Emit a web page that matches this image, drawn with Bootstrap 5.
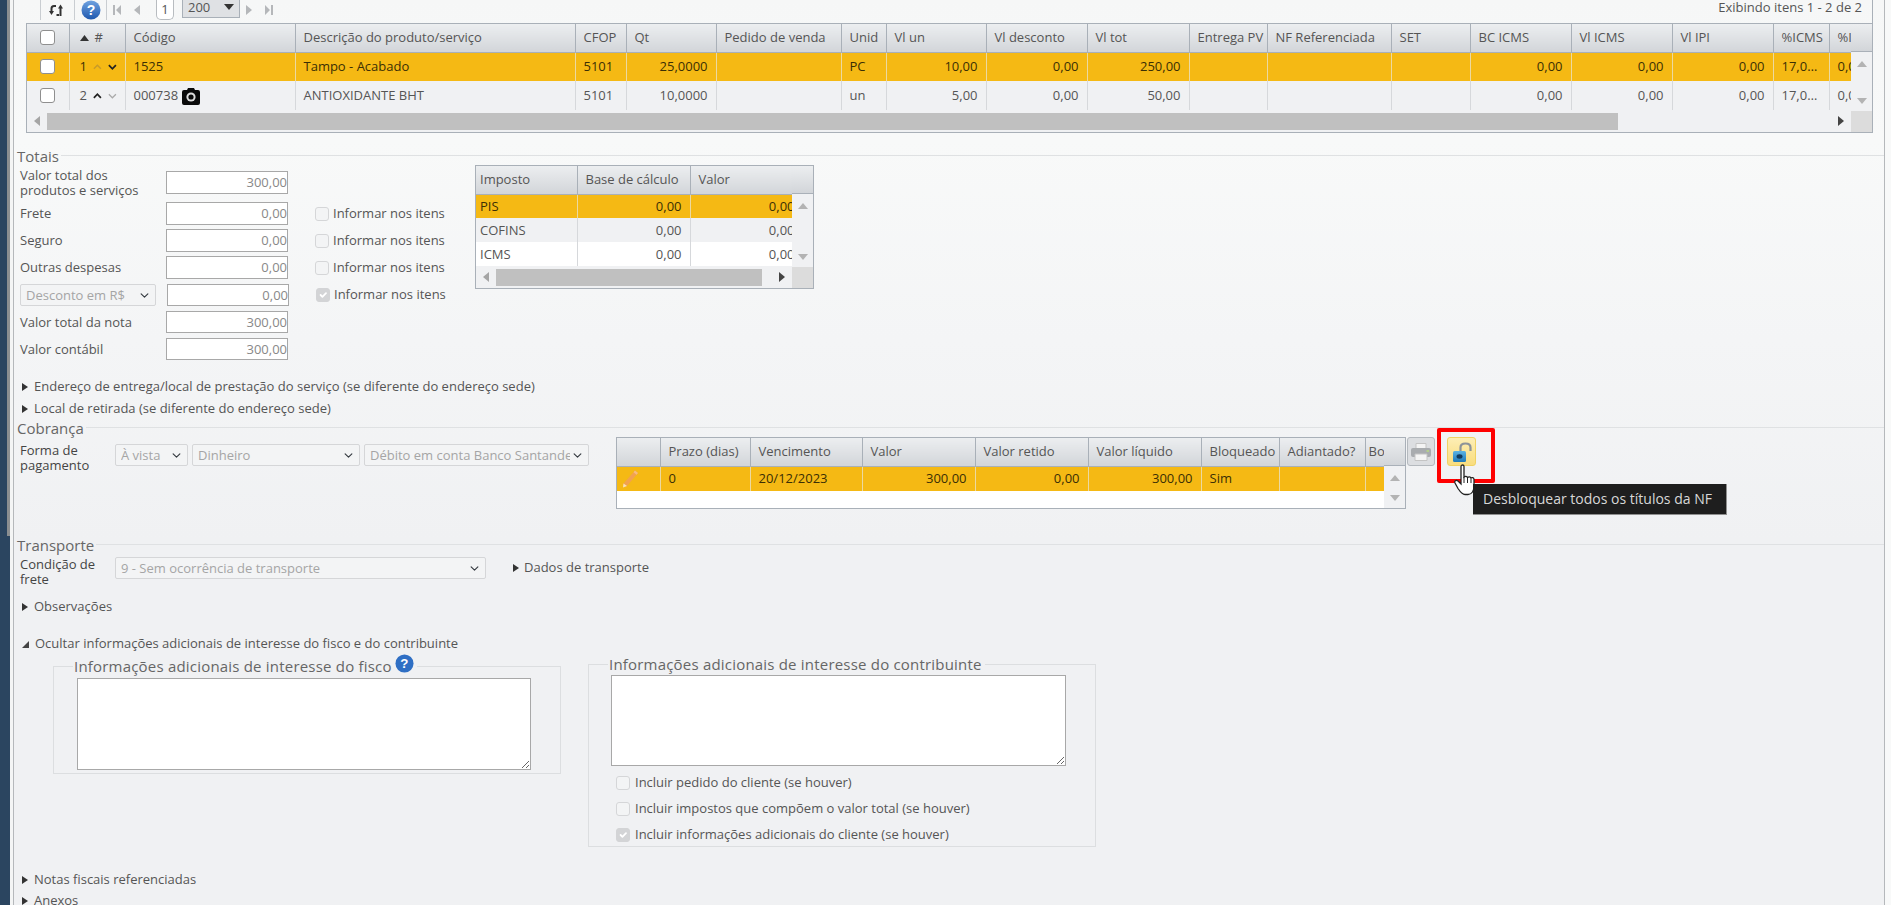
<!DOCTYPE html>
<html lang="pt-BR">
<head>
  <meta charset="UTF-8">
  <title>Nota fiscal</title>
  <link href="https://cdn.jsdelivr.net/npm/bootstrap@5.3.2/dist/css/bootstrap.min.css" rel="stylesheet">
  <style>
    html, body { height: 905px; overflow: hidden; }
    body {
      background: #f8f9f9;
      color: #555;
      font-family: "Open Sans", "Noto Sans", sans-serif;
      font-size: 13px;
      position: relative;
    }
    .shell { display: flex; height: 905px; }
    .strip { width: 10px; background: linear-gradient(90deg, #2b4560 7px, #8b8e90 7px); flex: none; height: 536px; box-shadow: 0 369px 0 #2b4560; }
    .strip-gap { width: 3px; background: #f4f5f5; flex: none; }
    .sheet {
      width: 1872px; flex: none; height: 905px;
      border-left: 1px solid #b5b8bb; border-right: 1px solid #b5b8bb;
      background: linear-gradient(#f6f7f7, #f8f9f9 140px, #f0f1f3 540px);
    }
    /* grid principal */
    .grid-top { margin-left: 12px; width: 1847px; height: 133px; }
    .pager { height: 23px; display: flex; align-items: flex-start; border-right: 1px solid #a9b0b8; }
    .pager-sep { width: 1px; height: 20px; background: #c9cdd1; flex: none; }
    .pager-cell { height: 20px; display: flex; align-items: center; justify-content: center; flex: none; }
    .cell-start { width: 14px; } .cell-a { width: 33px; } .cell-b { width: 31px; } .cell-c { width: 20px; }
    .page-num { width: 18px; height: 20px; border: 1px solid #b8bcc0; border-top: 0; border-radius: 0 0 5px 5px; background: #fff; text-align: center; line-height: 18px; margin: 0 8px 0 9px; flex: none; }
    .page-size { width: 58px; height: 18px; border: 1px solid #a9b0b8; border-top: 0; background: #dfe1e4; display: flex; justify-content: space-between; align-items: center; padding: 0 5px 3px; line-height: 14px; flex: none; margin-right: -1px; }
    .pager-info { margin-left: auto; margin-right: 10px; line-height: 15px; }
    .grid-box { border: 1px solid #a9b0b8; display: flex; flex-wrap: wrap; background: #f0f1f3; }
    .main-box { width: 1847px; height: 110px; }
    .tax-box { width: 339px; height: 124px; }
    .pay-box { width: 790px; height: 72px; background: #fff; }
    .grid-view { overflow: hidden; flex: none; }
    .main-box .grid-view { width: 1824px; }
    .tax-box .grid-view { width: 316px; }
    .pay-box .grid-view { width: 767px; }
    .nf-table { table-layout: fixed; width: 100%; margin: 0; border-collapse: collapse; --bs-table-bg: transparent; --bs-table-color: #555; font-size: 13px; }
    .nf-table > :not(caption) > * > * { padding: 0 8px; border-bottom: 0; border-right: 1px solid #d6d8db; white-space: nowrap; overflow: hidden; vertical-align: middle; color: #555; box-shadow: none; background: none; line-height: 15px; }
    .nf-table > thead > tr > th { height: 28px; font-weight: 400; background: linear-gradient(#eceef0, #d2d5d9); border-right: 1px solid #a9b0b8; border-bottom: 1px solid #a9b0b8; }
    .nf-table > thead > tr > .bo-head { padding: 0 0 0 3px; }
    .nf-table > tbody > tr > td { height: 29px; }
    .nf-table > tbody > tr.picked > td { background: #f5b914; color: #3b2f05; border-right-color: #ecd9a0; }
    .nf-table > tbody > tr.plain > td { background: #fff; }
    .tax-box .nf-table > tbody > tr > td { height: 24px; }
    .pay-box .nf-table > tbody > tr > td { height: 25px; }
    .nf-table > * > * > .num { text-align: right; }
    .nf-table > * > * > .ell { text-overflow: ellipsis; }
    .clip-val { display: inline-block; margin-right: -3px; }
    .vbar { width: 21px; flex: none; display: flex; flex-direction: column; background: #f0f1f3; }
    .vbar-cap { height: 28px; background: linear-gradient(#eceef0, #d2d5d9); border-bottom: 1px solid #a9b0b8; flex: none; }
    .vbar-track { flex: 1; display: flex; flex-direction: column; justify-content: space-between; align-items: center; padding: 9px 0 7px; }
    .hbar { width: 100%; height: 21px; display: flex; align-items: center; background: #f0f1f3; }
    .hbar-thumb { height: 17px; background: #c0c0c0; flex: none; }
    .thumb-main { width: 1571px; } .thumb-tax { width: 266px; }
    .hbar-arrow { width: 20px; flex: none; display: flex; justify-content: center; }
    .hbar-corner { width: 21px; height: 21px; background: #dcdcdc; flex: none; }
    .up { width: 0; height: 0; border: 5px solid transparent; border-top: 0; border-bottom: 6px solid #b3b3b3; }
    .down { width: 0; height: 0; border: 5px solid transparent; border-bottom: 0; border-top: 6px solid #b3b3b3; }
    .tri-l { width: 0; height: 0; border: 5px solid transparent; border-left: 0; border-right: 6px solid #a5a5a5; }
    .tri-r { width: 0; height: 0; border: 5px solid transparent; border-right: 0; border-left: 6px solid #444; }
    .nf-check { width: 15px; height: 15px; margin: 0 auto; display: block; border: 1px solid #8f8f8f; border-radius: 3px; background: #fff; }
    /* colunas */
    .main-cols col:nth-child(1) { width: 42px; } .main-cols col:nth-child(2) { width: 56px; }
    .main-cols col:nth-child(3) { width: 170px; } .main-cols col:nth-child(4) { width: 280px; }
    .main-cols col:nth-child(5) { width: 51px; } .main-cols col:nth-child(6) { width: 90px; }
    .main-cols col:nth-child(7) { width: 125px; } .main-cols col:nth-child(8) { width: 45px; }
    .main-cols col:nth-child(9) { width: 100px; } .main-cols col:nth-child(10) { width: 101px; }
    .main-cols col:nth-child(11) { width: 102px; } .main-cols col:nth-child(12) { width: 78px; }
    .main-cols col:nth-child(13) { width: 124px; } .main-cols col:nth-child(14) { width: 79px; }
    .main-cols col:nth-child(15) { width: 101px; } .main-cols col:nth-child(16) { width: 101px; }
    .main-cols col:nth-child(17) { width: 101px; } .main-cols col:nth-child(18) { width: 56px; }
    .main-cols col:nth-child(19) { width: 22px; }
    .tax-cols col:nth-child(1) { width: 101px; } .tax-cols col:nth-child(2) { width: 113px; } .tax-cols col:nth-child(3) { width: 102px; }
    .pay-cols col:nth-child(1) { width: 43px; } .pay-cols col:nth-child(2) { width: 90px; } .pay-cols col:nth-child(3) { width: 112px; }
    .pay-cols col:nth-child(4) { width: 113px; } .pay-cols col:nth-child(5) { width: 113px; } .pay-cols col:nth-child(6) { width: 113px; }
    .pay-cols col:nth-child(7) { width: 78px; } .pay-cols col:nth-child(8) { width: 86px; } .pay-cols col:nth-child(9) { width: 19px; }
    .pos-cell { display: flex; align-items: center; gap: 6px; padding-left: 2px; }
    .code-cell { display: flex; align-items: center; gap: 4px; }
    /* secoes */
    .sec-head { display: flex; align-items: center; gap: 2px; font-size: 15px; line-height: 18px; color: #666; padding-left: 3px; height: 18px; }
    .sec-head::after { content: ""; flex: 1; height: 1px; background: #dfe1e3; margin-top: -2px; }
    .sec-totais { margin-top: 14px; }
    .tot-body { display: flex; padding-left: 6px; height: 211px; }
    .tot-form { width: 455px; padding-top: 6px; flex: none; }
    .tot-row { display: flex; align-items: center; height: 23px; margin-bottom: 4px; }
    .tot-row:nth-child(1) { margin-bottom: 8px; }
    .tot-row:nth-child(4) { margin-bottom: 5px; }
    .tot-row:nth-child(5), .tot-row:nth-child(6), .tot-row:nth-child(7) { height: 22px; margin-bottom: 5px; }
    .tot-label { width: 146px; flex: none; line-height: 15px; color: #555; }
    .tot-input { width: 122px; height: 100%; border: 1px solid #a8a8a8; background: #fff; text-align: right; color: #888; line-height: 20px; flex: none; }
    .tot-check { display: flex; align-items: center; gap: 4px; margin-left: 27px; color: #555; }
    .form-select.nf-select { height: 22px; padding: 0 18px 0 5px; font-size: 13px; color: #a5a5a5; border: 1px solid #d5d6d8; border-radius: 2px; background-color: #f3f4f5; background-position: right 5px center; background-size: 11px 9px; flex: none; line-height: 20px; }
    .form-select.w-desc { width: 136px; margin-right: 11px; }
    .check-off { width: 14px; height: 14px; margin: 0; flex: none; }
    .form-check-input.check-off:disabled { opacity: 1; background-color: #f3f4f5; border-color: #d5d6d8; border-radius: 3px; }
    .form-check-input.check-off:checked:disabled { background-color: #d3d4d6; border-color: #d3d4d6; }
    .tri-link { display: flex; align-items: center; gap: 6px; height: 22px; padding-left: 8px; color: #555; }
    .tri-short { height: 21px; }
    .tri-dark { width: 0; height: 0; border: 4px solid transparent; border-right: 0; border-left: 6px solid #333; flex: none; }
    .tri-open { width: 0; height: 0; border-style: solid; border-width: 0 0 7px 7px; border-color: transparent transparent #444 transparent; flex: none; }
    .cob-body { display: flex; height: 99px; padding-left: 6px; }
    .pay-label { width: 95px; flex: none; padding-top: 6px; line-height: 15px; color: #444; }
    .pay-selects { display: flex; gap: 4px; padding-top: 7px; align-items: flex-start; }
    .form-select.w-a { width: 73px; } .form-select.w-b { width: 168px; } .form-select.w-c { width: 225px; }
    .form-select.w-d { width: 371px; }
    .pay-grid-wrap { margin-left: 27px; flex: none; }
    .tool-btn { width: 28px; height: 29px; border-radius: 3px; display: flex; align-items: center; justify-content: center; flex: none; padding: 0; }
    .btn-print { background: #dcdee1; border: 1px solid #b4b9be; margin-left: 1px; }
    .btn-unlock { background: linear-gradient(#fdeeb5, #f9dd7e); border: 1px solid #f0d264; margin-left: 12px; width: 29px; }
    .trans-body { display: flex; height: 42px; padding-left: 6px; padding-top: 3px; }
    .trans-body .pay-label { padding-top: 0; }
    .tri-link.dados { height: 22px; margin-left: 27px; padding-left: 0; gap: 5px; }
    .ocultar { margin-top: 15px; }
    .adic-row { display: flex; align-items: flex-start; margin-left: 39px; gap: 27px; height: 192px; }
    .adic-box { border: 1px solid #dcdee0; width: 508px; flex: none; }
    .adic-fisco { margin-top: 11px; height: 108px; }
    .adic-contr { margin-top: 9px; height: 183px; }
    .adic-title { font-size: 15px; letter-spacing: .2px; line-height: 18px; background: #f0f1f3; color: #666; margin: -10px 0 0 19px; width: max-content; padding: 0 3px 0 1px; display: flex; align-items: flex-start; gap: 3px; height: 18px; }
    .adic-title svg { margin-top: -3px; }
    .form-control.adic-area { display: block; border: 1px solid #a8a8a8; background: #fff; border-radius: 0; padding: 2px; min-height: 0; }
    .adic-fisco .form-control.adic-area { width: 454px; height: 92px; margin: 3px 0 0 23px; }
    .adic-contr .form-control.adic-area { width: 455px; height: 91px; margin: 2px 0 0 22px; }
    .adic-check { display: flex; align-items: center; gap: 5px; height: 26px; padding-left: 27px; }
    .adic-checks { padding-top: 4px; }
    .notas { margin-top: 22px; height: 21px; }
    /* sobreposicoes */
    .hl-box { position: absolute; left: 1437px; top: 428px; width: 58px; height: 55px; border: 4px solid #f00; border-radius: 2px; }
    .hand { position: absolute; left: 1453px; top: 464px; }
    .nf-tip { position: absolute; left: 1473px; top: 484px; width: 254px; height: 31px; background: #1e1e1e; border: 1px solid #8f8f8f; border-width: 0 1px 1px 0; color: #d8d8d8; font-size: 14px; line-height: 30px; padding-left: 10px; white-space: nowrap; }
  </style>
</head>
<body>

<div class="shell">
  <div class="strip"></div>
  <div class="strip-gap"></div>
  <div class="sheet">

    <div class="grid-top">
      <div class="pager">
        <div class="pager-cell cell-start"></div>
        <span class="pager-sep"></span>
        <div class="pager-cell cell-a">
          <svg width="17" height="13" viewBox="0 0 17 13"><path d="M7 2H5C3.500 2 2.500 3 2.500 4.500V9" fill="none" stroke="#333" stroke-width="2"/><path d="M0 7h5L2.500 11z" fill="#333"/><path d="M11.500 12V3" fill="none" stroke="#333" stroke-width="2"/><path d="M9 4.500h5L11.500 .5z" fill="#333"/><path d="M7.500 11H10" fill="none" stroke="#333" stroke-width="2"/></svg>
        </div>
        <span class="pager-sep"></span>
        <div class="pager-cell cell-b">
          <svg width="20" height="20" viewBox="0 0 20 20"><defs><linearGradient id="hg" x1="0" y1="0" x2="0" y2="1"><stop offset="0" stop-color="#6fa2e0"/><stop offset="1" stop-color="#1f58ae"/></linearGradient></defs><circle cx="10" cy="10" r="9.500" fill="url(#hg)"/><text x="10" y="15" text-anchor="middle" font-family="Liberation Sans, sans-serif" font-weight="700" font-size="14" fill="#fff">?</text></svg>
        </div>
        <span class="pager-sep"></span>
        <div class="pager-cell cell-c">
          <svg width="8" height="10" viewBox="0 0 8 10"><path d="M0 0h2v10H0zM8 0v10L3 5z" fill="#b5b7ba"/></svg>
        </div>
        <div class="pager-cell cell-c">
          <svg width="6" height="10" viewBox="0 0 6 10"><path d="M6 0v10L0 5z" fill="#b5b7ba"/></svg>
        </div>
        <div class="page-num">1</div>
        <div class="page-size"><span>200</span><svg width="10" height="6" viewBox="0 0 10 6"><path d="M0 0h10L5 6z" fill="#333"/></svg></div>
        <div class="pager-cell cell-c">
          <svg width="6" height="10" viewBox="0 0 6 10"><path d="M0 0v10l6-5z" fill="#b5b7ba"/></svg>
        </div>
        <div class="pager-cell cell-c">
          <svg width="8" height="10" viewBox="0 0 8 10"><path d="M0 0v10l5-5zM6 0h2v10H6z" fill="#b5b7ba"/></svg>
        </div>
        <div class="pager-info">Exibindo itens 1 - 2 de 2</div>
      </div>

      <div class="grid-box main-box">
        <div class="grid-view">
          <table class="table nf-table main-cols">
            <colgroup><col><col><col><col><col><col><col><col><col><col><col><col><col><col><col><col><col><col><col></colgroup>
            <thead>
              <tr>
                <th><span class="nf-check"></span></th>
                <th><span class="pos-cell"><svg width="9" height="6" viewBox="0 0 9 6"><path d="M0 6h9L4.500 0z" fill="#333"/></svg>#</span></th>
                <th>Código</th><th>Descrição do produto/serviço</th><th>CFOP</th><th>Qt</th><th>Pedido de venda</th><th>Unid</th><th>Vl un</th><th>Vl desconto</th><th>Vl tot</th><th>Entrega PV</th><th>NF Referenciada</th><th>SET</th><th>BC ICMS</th><th>Vl ICMS</th><th>Vl IPI</th><th>%ICMS</th><th>%IPI</th>
              </tr>
            </thead>
            <tbody>
              <tr class="picked">
                <td><span class="nf-check"></span></td>
                <td><span class="pos-cell">1
                  <svg width="10" height="6" viewBox="0 0 10 6"><path d="M1 5l4-4 4 4" fill="none" stroke="#c79a2a" stroke-width="1.600"/></svg>
                  <svg width="10" height="6" viewBox="0 0 10 6"><path d="M1 1l4 4 4-4" fill="none" stroke="#222" stroke-width="2"/></svg></span></td>
                <td>1525</td><td>Tampo - Acabado</td><td>5101</td><td class="num">25,0000</td><td></td><td>PC</td><td class="num">10,00</td><td class="num">0,00</td><td class="num">250,00</td><td></td><td></td><td></td><td class="num">0,00</td><td class="num">0,00</td><td class="num">0,00</td><td class="ell">17,0000</td><td>0,00</td>
              </tr>
              <tr>
                <td><span class="nf-check"></span></td>
                <td><span class="pos-cell">2
                  <svg width="10" height="6" viewBox="0 0 10 6"><path d="M1 5l4-4 4 4" fill="none" stroke="#222" stroke-width="2"/></svg>
                  <svg width="10" height="6" viewBox="0 0 10 6"><path d="M1 1l4 4 4-4" fill="none" stroke="#aaa" stroke-width="1.400"/></svg></span></td>
                <td><span class="code-cell">000738
                  <svg width="18" height="18" viewBox="0 0 18 18"><path d="M2 3h3l1-2h6l1 2h3a2 2 0 0 1 2 2v11a2 2 0 0 1-2 2H2a2 2 0 0 1-2-2V5a2 2 0 0 1 2-2z" fill="#0a0a0a"/><circle cx="9" cy="10" r="4.600" fill="#ddd"/><circle cx="9" cy="10" r="2.600" fill="#0a0a0a"/></svg></span></td>
                <td>ANTIOXIDANTE BHT</td><td>5101</td><td class="num">10,0000</td><td></td><td>un</td><td class="num">5,00</td><td class="num">0,00</td><td class="num">50,00</td><td></td><td></td><td></td><td class="num">0,00</td><td class="num">0,00</td><td class="num">0,00</td><td class="ell">17,0000</td><td>0,00</td>
              </tr>
            </tbody>
          </table>
        </div>
        <div class="vbar">
          <div class="vbar-cap"></div>
          <div class="vbar-track"><span class="up"></span><span class="down"></span></div>
        </div>
        <div class="hbar">
          <span class="hbar-arrow"><span class="tri-l"></span></span>
          <span class="hbar-thumb thumb-main"></span>
          <span class="hbar-arrow ms-auto"><span class="tri-r"></span></span>
          <span class="hbar-corner"></span>
        </div>
      </div>
    </div>

    <div class="sec-head sec-totais">Totais</div>
    <div class="tot-body">
      <div class="tot-form">
        <div class="tot-row"><div class="tot-label">Valor total dos<br>produtos e serviços</div><div class="tot-input">300,00</div></div>
        <div class="tot-row"><div class="tot-label">Frete</div><div class="tot-input">0,00</div>
          <label class="tot-check"><input class="form-check-input check-off" type="checkbox" disabled>Informar nos itens</label></div>
        <div class="tot-row"><div class="tot-label">Seguro</div><div class="tot-input">0,00</div>
          <label class="tot-check"><input class="form-check-input check-off" type="checkbox" disabled>Informar nos itens</label></div>
        <div class="tot-row"><div class="tot-label">Outras despesas</div><div class="tot-input">0,00</div>
          <label class="tot-check"><input class="form-check-input check-off" type="checkbox" disabled>Informar nos itens</label></div>
        <div class="tot-row">
          <select class="form-select nf-select w-desc" disabled><option>Desconto em R$</option></select>
          <div class="tot-input">0,00</div>
          <label class="tot-check"><input class="form-check-input check-off" type="checkbox" checked disabled>Informar nos itens</label></div>
        <div class="tot-row"><div class="tot-label">Valor total da nota</div><div class="tot-input">300,00</div></div>
        <div class="tot-row"><div class="tot-label">Valor contábil</div><div class="tot-input">300,00</div></div>
      </div>
      <div class="grid-box tax-box">
        <div class="grid-view">
          <table class="table nf-table tax-cols">
            <colgroup><col><col><col></colgroup>
            <thead><tr><th class="px-1">Imposto</th><th class="px-2">Base de cálculo</th><th class="px-2">Valor</th></tr></thead>
            <tbody>
              <tr class="picked"><td class="px-1">PIS</td><td class="num">0,00</td><td class="num pe-0"><span class="clip-val">0,00</span></td></tr>
              <tr><td class="px-1">COFINS</td><td class="num">0,00</td><td class="num pe-0"><span class="clip-val">0,00</span></td></tr>
              <tr class="plain"><td class="px-1">ICMS</td><td class="num">0,00</td><td class="num pe-0"><span class="clip-val">0,00</span></td></tr>
            </tbody>
          </table>
        </div>
        <div class="vbar">
          <div class="vbar-cap"></div>
          <div class="vbar-track"><span class="up"></span><span class="down"></span></div>
        </div>
        <div class="hbar">
          <span class="hbar-arrow"><span class="tri-l"></span></span>
          <span class="hbar-thumb thumb-tax"></span>
          <span class="hbar-arrow ms-auto"><span class="tri-r"></span></span>
          <span class="hbar-corner"></span>
        </div>
      </div>
    </div>

    <div class="tri-link"><span class="tri-dark"></span>Endereço de entrega/local de prestação do serviço (se diferente do endereço sede)</div>
    <div class="tri-link tri-short"><span class="tri-dark"></span>Local de retirada (se diferente do endereço sede)</div>

    <div class="sec-head">Cobrança</div>
    <div class="cob-body">
      <div class="pay-label">Forma de<br>pagamento</div>
      <div class="pay-selects">
        <select class="form-select nf-select w-a" disabled><option>À vista</option></select>
        <select class="form-select nf-select w-b" disabled><option>Dinheiro</option></select>
        <select class="form-select nf-select w-c" disabled><option>Débito em conta Banco Santander</option></select>
      </div>
      <div class="pay-grid-wrap">
        <div class="grid-box pay-box">
          <div class="grid-view">
            <table class="table nf-table pay-cols">
              <colgroup><col><col><col><col><col><col><col><col><col></colgroup>
              <thead><tr><th></th><th>Prazo (dias)</th><th>Vencimento</th><th>Valor</th><th>Valor retido</th><th>Valor líquido</th><th>Bloqueado</th><th>Adiantado?</th><th class="bo-head">Boleto</th></tr></thead>
              <tbody>
                <tr class="picked">
                  <td class="px-1"><svg width="18" height="18" viewBox="0 0 18 18"><path d="M14 .5l3 2.500L6 16 2 17.500l.5-4z" fill="#f2a24e"/><path d="M2.500 13.500L2 17.500 6 16z" fill="#f8e2b8"/><path d="M14 .5l3 2.500-1.500 1.800-3-2.500z" fill="#f6bb80"/></svg></td>
                  <td>0</td><td>20/12/2023</td><td class="num">300,00</td><td class="num">0,00</td><td class="num">300,00</td><td>Sim</td><td></td><td></td>
                </tr>
              </tbody>
            </table>
          </div>
          <div class="vbar">
            <div class="vbar-cap"></div>
            <div class="vbar-track"><span class="up"></span><span class="down"></span></div>
          </div>
        </div>
      </div>
      <div class="tool-btn btn-print">
        <svg width="20" height="18" viewBox="0 0 20 18"><path d="M5 .5h10V6H5z" fill="#f4f4f4" stroke="#c4c4c4"/><rect x="0" y="5" width="20" height="9" rx="2" fill="#a9acaf"/><rect x="15.500" y="7" width="2.500" height="2" fill="#b4cf8c"/><path d="M4 11h12v6.500H4z" fill="#f4f4f4" stroke="#c4c4c4"/></svg>
      </div>
      <div class="tool-btn btn-unlock">
        <svg width="20" height="20" viewBox="0 0 20 20"><path d="M8.500 9.500V5.500C8.500 3 10.500 1.500 13.500 1.500S18.500 3 18.500 5.500V9" fill="none" stroke="#8d9398" stroke-width="2.200"/><defs><linearGradient id="lk" x1="0" y1="0" x2="0" y2="1"><stop offset="0" stop-color="#5cb4e4"/><stop offset="1" stop-color="#1f78b8"/></linearGradient></defs><rect x="1" y="9" width="13" height="11" rx="1.500" fill="url(#lk)"/><ellipse cx="7.500" cy="14.500" rx="3" ry="2.200" fill="#123a5c"/></svg>
      </div>
    </div>

    <div class="sec-head">Transporte</div>
    <div class="trans-body">
      <div class="pay-label">Condição de<br>frete</div>
      <select class="form-select nf-select w-d" disabled><option>9 - Sem ocorrência de transporte</option></select>
      <div class="tri-link dados"><span class="tri-dark"></span>Dados de transporte</div>
    </div>
    <div class="tri-link"><span class="tri-dark"></span>Observações</div>
    <div class="tri-link ocultar"><span class="tri-open"></span>Ocultar informações adicionais de interesse do fisco e do contribuinte</div>

    <div class="adic-row">
      <div class="adic-box adic-fisco">
        <div class="adic-title">Informações adicionais de interesse do fisco
          <svg width="19" height="19" viewBox="0 0 20 20"><circle cx="10" cy="10" r="9.500" fill="#2f6fc4"/><text x="10" y="15" text-anchor="middle" font-family="Liberation Sans, sans-serif" font-weight="700" font-size="14" fill="#fff">?</text></svg>
        </div>
        <textarea class="form-control adic-area"></textarea>
      </div>
      <div class="adic-box adic-contr">
        <div class="adic-title">Informações adicionais de interesse do contribuinte</div>
        <textarea class="form-control adic-area"></textarea>
        <div class="adic-checks">
          <label class="adic-check"><input class="form-check-input check-off" type="checkbox" disabled>Incluir pedido do cliente (se houver)</label>
          <label class="adic-check"><input class="form-check-input check-off" type="checkbox" disabled>Incluir impostos que compõem o valor total (se houver)</label>
          <label class="adic-check"><input class="form-check-input check-off" type="checkbox" checked disabled>Incluir informações adicionais do cliente (se houver)</label>
        </div>
      </div>
    </div>

    <div class="tri-link notas"><span class="tri-dark"></span>Notas fiscais referenciadas</div>
    <div class="tri-link"><span class="tri-dark"></span>Anexos</div>
  </div>
</div>

<div class="hl-box"></div>
<svg class="hand" width="26" height="33" viewBox="0 0 26 33">
  <path d="M8 2.500c0-2 3-2 3 0V13c1-1 3-1 3.500.5 1-1 3-1 3.500.5 1-.8 3-.5 3 1.500v7c0 4-2 8-6 8h-3c-3 0-5-3-7-6L2 19c-1-2 1-3.500 3-2l3 3z" fill="#fff" stroke="#222" stroke-width="1.300"/>
  <path d="M11 13v6M14.500 13.500V19M18 14.500V19" fill="none" stroke="#222" stroke-width="1"/>
</svg>
<div class="nf-tip">Desbloquear todos os títulos da NF</div>

</body>
</html>
